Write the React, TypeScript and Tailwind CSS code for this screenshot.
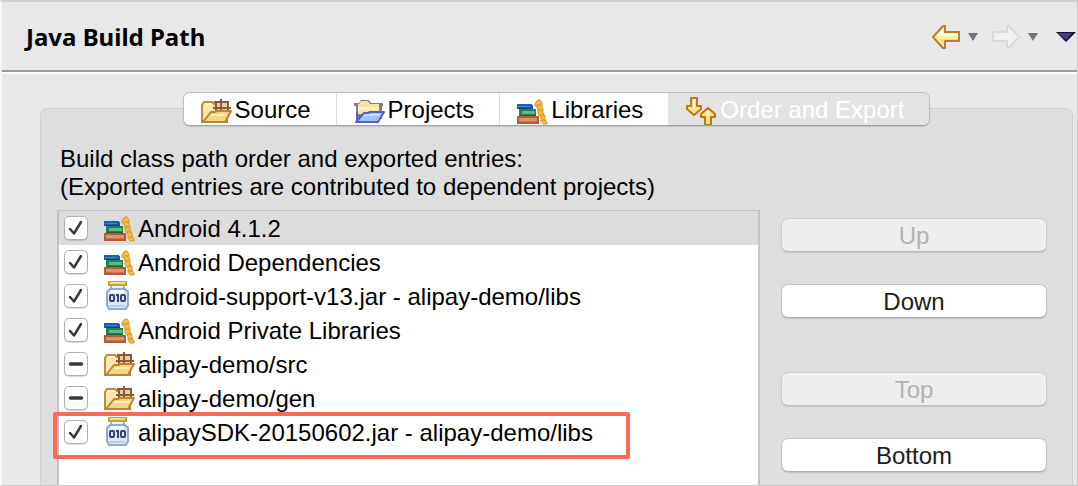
import { useState } from "react";
import type { ComponentType } from "react";

type IconProps = { className?: string };
type CheckState = "on" | "mixed" | "off";
type Entry = { name: string; Icon: ComponentType<IconProps>; state: CheckState };

function BooksIcon({ className }: IconProps) {
  return (
    <svg viewBox="0 0 32 32" className={className} aria-hidden="true">
      <path d="M1 9h15v1h1v4H1z" fill="#1d5fae" />
      <path d="M2 11h12v1H2z" fill="#3f84cc" />
      <path d="M3 13h14v1H3z" fill="#123f7c" />
      <path d="M3 14h17v7H3z" fill="#1f8257" />
      <path d="M6 16h13v3H6z" fill="#5fb985" />
      <path d="M3 20h17v1H3z" fill="#166343" />
      <path d="M1 21h22v8H1z" fill="#b55a36" />
      <path d="M3 23h18v3H3z" fill="#db946c" />
      <path d="M3 26h18v1H3z" fill="#c9764f" />
      <path
        d="M20 7l2-2h2l2 3v4l1 2v4l2 3v4l2 2v2h-4l-2-3v-4l-3-3v-4l-1-3-2-1V9z"
        fill="#f5bd45"
        stroke="#dd981f"
        strokeWidth="1"
        strokeLinejoin="round"
      />
      <path d="M21 10h4M22 15h4M24 20h4M26 25h4" fill="none" stroke="#d08a1c" strokeWidth="1" />
    </svg>
  );
}

function JarIcon({ className }: IconProps) {
  return (
    <svg viewBox="0 0 32 32" className={className} aria-hidden="true">
      <path d="M5 1h19v5H5z" fill="#c9a136" />
      <path d="M7 2h15v2H7z" fill="#f7e08a" />
      <path d="M7 6h15v3H7z" fill="#9db4d6" />
      <path d="M9 6h11v3H9z" fill="#e9f1fa" />
      <path
        d="M7 9h15l3 3v13l-2 4H6l-2-4V12z"
        fill="#dbe7f6"
        stroke="#93a8ce"
        strokeWidth="2"
      />
      <path d="M8 10h13v3H8z" fill="#f6faff" />
      <path d="M7 25h15v2H7z" fill="#b9cdea" />
      <g fill="none" stroke="#33496f" strokeWidth="2">
        <rect x="7" y="15" width="4" height="6" rx="1" />
        <path d="M13 15h2v7" />
        <rect x="18" y="15" width="4" height="6" rx="1" />
      </g>
    </svg>
  );
}

function PackageFolderIcon({ className }: IconProps) {
  return (
    <svg viewBox="0 0 32 32" className={className} aria-hidden="true">
      <path d="M2 27V10l2-3h8l2 2h13v18z" fill="#f8e6ac" stroke="#c08a38" strokeWidth="2" />
      <path d="M4 8h8v2H4z" fill="#fff6d0" />
      <path d="M15 6h14v11H15z" fill="#ebcf9e" />
      <path
        d="M21 4v14M28 6v11M14 7h15M13 13h18M16 6v11"
        fill="none"
        stroke="#8d5836"
        strokeWidth="2"
      />
      <path
        d="M3 27l8-10h4l2-1h14l-6 11z"
        fill="#f6d585"
        stroke="#bd8531"
        strokeWidth="2"
        strokeLinejoin="round"
      />
      <path d="M12 19h15l-1 2H10z" fill="#fdebb8" />
    </svg>
  );
}

function ProjectsIcon({ className }: IconProps) {
  return (
    <svg viewBox="0 0 32 32" className={className} aria-hidden="true">
      <path d="M1 8h5l2-3h8l2 3h12v3h-1v13H3V11H1z" fill="#857a96" />
      <path d="M6 9l2-3h7l2 3h9v10H5V9z" fill="#f7e3a2" />
      <path d="M5 12h21v3H5z" fill="#fdf2cc" />
      <path
        d="M3 27l8-9h4l2-1h14l-6 10z"
        fill="#9fc4f7"
        stroke="#4f62cc"
        strokeWidth="2"
        strokeLinejoin="round"
      />
      <path d="M12 19h15l-1 2H10z" fill="#c9e0ff" />
      <path d="M4 17v9" fill="none" stroke="#4f62cc" strokeWidth="2" />
    </svg>
  );
}

function OrderIcon({ className }: IconProps) {
  return (
    <svg viewBox="0 0 32 32" className={className} aria-hidden="true">
      <g fill="#fbe08a" stroke="#b9781b" strokeWidth="2" strokeLinejoin="round">
        <path d="M6 3h6v8h4v3l-7 6-7-6v-3h4z" />
        <path d="M20 30h6v-8h4v-3l-7-6-7 6v3h4z" />
      </g>
      <path d="M8 4h2v10H8zM22 16h2v5h-2z" fill="#fff7cf" />
    </svg>
  );
}

function BackIcon({ className }: IconProps) {
  return (
    <svg viewBox="0 0 28 26" className={className} aria-hidden="true">
      <path
        d="M1 13L11 2h2v6h14v9H13v7h-2z"
        fill="#fdedae"
        stroke="#b9812a"
        strokeWidth="2"
        strokeLinejoin="round"
      />
      <path d="M4 12l7-7v5h15v2z" fill="#fffce6" />
      <path d="M6 15h20v1H12v4z" fill="#fadb7a" />
    </svg>
  );
}

function ForwardIcon({ className }: IconProps) {
  return (
    <svg viewBox="0 0 28 26" className={className} aria-hidden="true">
      <path
        d="M27 13L17 2h-2v6H1v9h14v7h2z"
        fill="#f0f0f0"
        stroke="#d9d9d9"
        strokeWidth="2"
        strokeLinejoin="round"
      />
    </svg>
  );
}

function SmallTriangle() {
  return (
    <svg viewBox="0 0 10 8" className="h-2 w-[10px]" aria-hidden="true">
      <path d="M0 0h10L5 8z" fill="#757575" />
    </svg>
  );
}

const tabs = [
  { name: "Source", Icon: PackageFolderIcon },
  { name: "Projects", Icon: ProjectsIcon },
  { name: "Libraries", Icon: BooksIcon },
  { name: "Order and Export", Icon: OrderIcon },
];

const initialEntries: Entry[] = [
  { name: "Android 4.1.2", Icon: BooksIcon, state: "on" },
  { name: "Android Dependencies", Icon: BooksIcon, state: "on" },
  { name: "android-support-v13.jar - alipay-demo/libs", Icon: JarIcon, state: "on" },
  { name: "Android Private Libraries", Icon: BooksIcon, state: "on" },
  { name: "alipay-demo/src", Icon: PackageFolderIcon, state: "mixed" },
  { name: "alipay-demo/gen", Icon: PackageFolderIcon, state: "mixed" },
  { name: "alipaySDK-20150602.jar - alipay-demo/libs", Icon: JarIcon, state: "on" },
];

function CheckBox({ id, state, onChange }: { id: string; state: CheckState; onChange: () => void }) {
  return (
    <span className="grid h-6 w-6 shrink-0">
      <input
        id={id}
        type="checkbox"
        checked={state === "on"}
        ref={(el) => {
          if (el) el.indeterminate = state === "mixed";
        }}
        onChange={onChange}
        className="col-start-1 row-start-1 h-6 w-6 appearance-none rounded-[5px] border border-[#b0b0b0] bg-white shadow-[0_1px_1px_rgba(0,0,0,0.15)]"
      />
      <svg
        viewBox="0 0 24 24"
        className="pointer-events-none col-start-1 row-start-1 h-6 w-6"
        fill="none"
        stroke="#3a3a3a"
        strokeLinecap="round"
        strokeLinejoin="round"
        aria-hidden="true"
      >
        {state === "on" && <path d="M6 13l4 4.500L17 6" strokeWidth="2.500" />}
        {state === "mixed" && <path d="M6.500 12h11" strokeWidth="3.500" />}
      </svg>
    </span>
  );
}

function SideButton({ label, disabled = false }: { label: string; disabled?: boolean }) {
  return (
    <button
      type="button"
      disabled={disabled}
      className="h-[34px] w-full rounded-[7px] border border-[#c4c4c4] border-b-[#adadad] bg-white pt-[2px] leading-[30px] text-[#1c1c1c] shadow-[0_1px_1px_rgba(0,0,0,0.12)] disabled:border-[#cdcdcd] disabled:border-b-[#bdbdbd] disabled:bg-[#eeeeee] disabled:text-[#b2b2b2]"
    >
      {label}
    </button>
  );
}

export default function App() {
  const [active, setActive] = useState(3);
  const [selected, setSelected] = useState(0);
  const [entries, setEntries] = useState(initialEntries);

  const toggle = (index: number) =>
    setEntries(entries.map((e, i) => (i === index ? { ...e, state: e.state === "on" ? "off" : "on" } : e)));

  return (
    <div className="flex min-h-screen flex-col border-t-2 border-r border-b border-l-2 border-t-[#cdcdcd] border-r-[#c8c8c8] border-b-[#c8c8c8] border-l-[#f6f6f6] bg-[#e8e8e8] font-['Liberation_Sans',Arial,sans-serif] text-2xl text-black">
      <header className="flex h-[72px] shrink-0 items-center justify-between border-b-2 border-white pl-6 shadow-[inset_0_-2px_0_#9b9b9b]">
        <h1 className="font-['Noto_Sans',sans-serif] font-bold">Java Build Path</h1>
        <div className="flex items-center">
          <button type="button" aria-label="Back">
            <BackIcon className="h-[26px] w-7" />
          </button>
          <button type="button" aria-label="Back history" className="ml-2">
            <SmallTriangle />
          </button>
          <button type="button" aria-label="Forward" disabled className="ml-[14px]">
            <ForwardIcon className="h-[26px] w-7" />
          </button>
          <button type="button" aria-label="Forward history" className="ml-2">
            <SmallTriangle />
          </button>
          <button type="button" aria-label="Menu" className="mr-px ml-[18px]">
            <svg viewBox="0 0 20 10" className="h-[10px] w-5" aria-hidden="true">
              <path d="M0 0h20L10 10z" fill="#17122e" />
              <path d="M2 1h14l-6 7z" fill="#4b3a86" />
            </svg>
          </button>
        </div>
      </header>

      <main className="flex grow flex-col pt-[18px] pr-1 pl-[38px]">
        <div role="tablist" className="relative z-10 -mb-[18px] flex justify-center">
          <div className="flex overflow-hidden rounded-[7px] border border-[#bdbdbd] border-b-[#a2a2a2] bg-white shadow-[0_1px_1px_rgba(0,0,0,0.12)]">
            {tabs.map(({ name, Icon }, i) => (
              <button
                key={name}
                type="button"
                role="tab"
                aria-selected={i === active}
                onClick={() => setActive(i)}
                className={`flex h-8 items-center gap-[3px] border-l pt-[2px] pr-[25px] pl-4 first:border-l-0 ${
                  i === active ? "border-[#e3e3e3] bg-[#e3e3e3] text-white" : "border-[#dcdcdc] bg-white"
                }`}
              >
                <Icon className="mt-[2px] h-8 w-8 shrink-0" />
                {name}
              </button>
            ))}
          </div>
        </div>

        <section className="flex grow flex-col rounded-t-lg border border-b-0 border-[#d0d0d0] bg-[#dedede] pt-9 pr-[25px] pl-4">
          <p className="pl-[3px] leading-7">
            Build class path order and exported entries:
            <br />
            (Exported entries are contributed to dependent projects)
          </p>

          <div className="mt-[9px] flex grow gap-[21px]">
            <ul className="min-w-0 grow border-x-2 border-t border-[#c3c3c3] bg-white">
              {entries.map(({ name, Icon, state }, i) => (
                <li
                  key={name}
                  onClick={() => setSelected(i)}
                  className={`relative flex h-[34px] items-center pl-[5px] ${i === selected ? "bg-[#dcdcdc]" : ""}`}
                >
                  <CheckBox id={`entry-${i}`} state={state} onChange={() => toggle(i)} />
                  <Icon className="ml-[15px] h-8 w-8 shrink-0" />
                  <label htmlFor={`entry-${i}`} className="ml-[3px] pt-[2px] whitespace-nowrap">
                    {name}
                  </label>
                  {i === 6 && (
                    <span className="pointer-events-none absolute -top-[3px] -left-[6px] h-[47px] w-[577px] rounded-[2px] border-4 border-[#f96a5a]" />
                  )}
                </li>
              ))}
            </ul>

            <div className="flex w-[266px] shrink-0 flex-col gap-8 pt-2">
              <SideButton label="Up" disabled />
              <SideButton label="Down" />
              <div className="mt-[22px] flex flex-col gap-8">
                <SideButton label="Top" disabled />
                <SideButton label="Bottom" />
              </div>
            </div>
          </div>
        </section>
      </main>
    </div>
  );
}
